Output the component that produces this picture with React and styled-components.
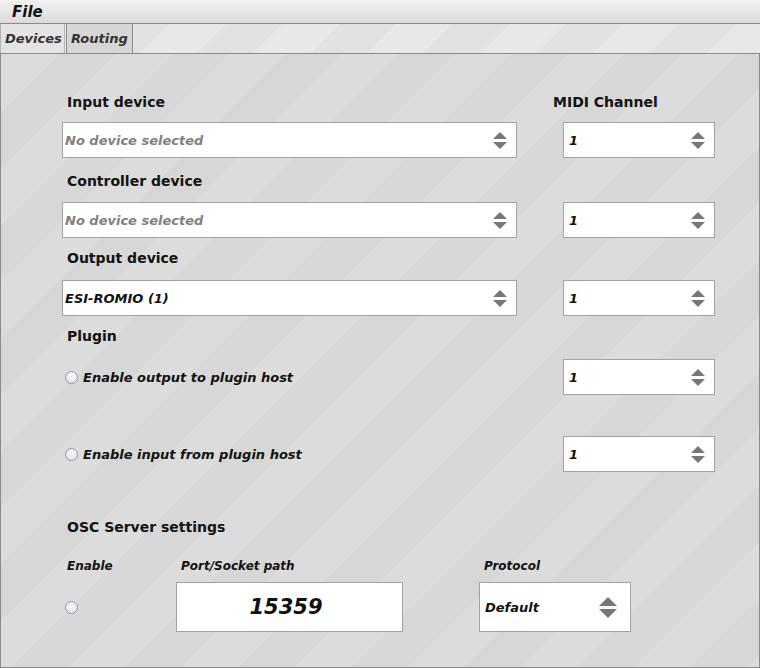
import styled, { createGlobalStyle } from "styled-components";

const GlobalStyle = createGlobalStyle`
  html, body {
    margin: 0;
    padding: 0;
    background: #d9d9d9;
  }
  body {
    font-family: "DejaVu Sans", "Liberation Sans", sans-serif;
    color: #111;
  }
`

const stripes = `repeating-linear-gradient(
  135deg,
  #d7d7d7 0px,
  #d7d7d7 40px,
  #dcdcdc 40px,
  #dcdcdc 80px
)`

const Window = styled.div`
  width: 760px;
  height: 668px;
  display: flex;
  flex-direction: column;
  background: ${stripes};
  overflow: hidden;
`

const MenuBar = styled.div`
  height: 23px;
  display: flex;
  align-items: center;
  padding-left: 12px;
  background: linear-gradient(#f2f2f2, #dadada);
  border-bottom: 1px solid #8a8a8a;

  span {
    font-size: 15px;
    font-weight: bold;
    font-style: italic;
  }
`

const TabBar = styled.div`
  height: 29px;
  display: flex;
  align-items: stretch;
  background: repeating-linear-gradient(135deg, #e2e2e2 0px, #e2e2e2 40px, #e8e8e8 40px, #e8e8e8 80px);
`

const Tab = styled.div`
  display: flex;
  align-items: center;
  padding: 0 4px;
  width: ${p => p.$w}px;
  box-sizing: border-box;
  font-size: 13px;
  font-weight: bold;
  font-style: italic;
  color: #333;
  background: ${p => (p.$active ? "#e4e4e4" : "#d6d6d6")};
  border: 1px solid ${p => (p.$active ? "#b4b4b4" : "#8a8a8a")};
  border-top: none;
  border-bottom: none;
  margin-right: 1px;
`

const Panel = styled.div`
  flex: 1;
  border: 1px solid #8a8a8a;
  padding: 38px 0 0 61px;
  display: flex;
  flex-direction: column;
`

const Row = styled.div`
  display: grid;
  grid-template-columns: 455px 152px;
  column-gap: 46px;
  align-items: center;
  margin-top: ${p => p.$mt || 0}px;
`

const Label = styled.div`
  font-size: 14px;
  font-weight: bold;
  line-height: 20px;
  padding-left: 5px;
  margin-left: ${p => p.$shift || 0}px;
  white-space: nowrap;
`

const SmallLabel = styled.div`
  font-size: 12px;
  font-weight: bold;
  font-style: italic;
  line-height: 20px;
  padding-left: 5px;
`

const Box = styled.div`
  height: ${p => p.$h || 36}px;
  box-sizing: border-box;
  background: #fff;
  border: 1px solid #a2a2a2;
  display: flex;
  align-items: center;
  padding: 0 ${p => p.$pr || 9}px 0 ${p => p.$pl || 2}px;
  font-size: ${p => p.$fs || 13}px;
  font-weight: bold;
  font-style: italic;
  color: ${p => (p.$muted ? "#808080" : "#111")};
  justify-content: ${p => (p.$center ? "center" : "space-between")};
`

const Arrows = ({ size = 14 }) => {
  const h = size / 2;
  return (
    <svg width={size} height={size + 3} viewBox={`0 0 ${size} ${size + 3}`}>
      <polygon points={`0,${h} ${h},0 ${size},${h}`} fill="#777" />
      <polygon points={`0,${h + 3} ${size},${h + 3} ${h},${size + 3}`} fill="#777" />
    </svg>
  );
};

const Combo = ({ children, muted, pl, h, arrow, pr }) => (
  <Box $muted={muted} $pl={pl} $h={h} $pr={pr}>
    <span>{children}</span>
    <Arrows size={arrow} />
  </Box>
);

const RadioRow = styled.label`
  display: flex;
  align-items: center;
  gap: 5px;
  padding-left: 3px;
  font-size: 13px;
  font-weight: bold;
  font-style: italic;
`

const RadioDot = styled.span`
  width: 11px;
  height: 11px;
  border-radius: 50%;
  border: 1px solid #9a9a9a;
  background: radial-gradient(circle at 50% 35%, #fafaff, #dcdce8);
  display: inline-block;
  flex-shrink: 0;
`

const OscGrid = styled.div`
  display: grid;
  grid-template-columns: 114px 227px 76px 152px;
  align-items: center;
  margin-top: ${p => p.$mt || 0}px;
`

const Cell = styled.div`
  grid-column: ${p => p.$col};
`

export default function App() {
  return (
    <Window>
      <GlobalStyle />
      <MenuBar>
        <span>File</span>
      </MenuBar>
      <TabBar>
        <Tab $active $w={65}>Devices</Tab>
        <Tab $w={67}>Routing</Tab>
      </TabBar>
      <Panel>
        <Row>
          <Label>Input device</Label>
          <Label $shift={-15}>MIDI Channel</Label>
        </Row>
        <Row $mt={10}>
          <Combo muted>No device selected</Combo>
          <Combo pl={5}>1</Combo>
        </Row>
        <Row $mt={13}>
          <Label>Controller device</Label>
        </Row>
        <Row $mt={11}>
          <Combo muted>No device selected</Combo>
          <Combo pl={5}>1</Combo>
        </Row>
        <Row $mt={10}>
          <Label>Output device</Label>
        </Row>
        <Row $mt={12}>
          <Combo>ESI-ROMIO (1)</Combo>
          <Combo pl={5}>1</Combo>
        </Row>
        <Row $mt={10}>
          <Label>Plugin</Label>
        </Row>
        <Row $mt={13}>
          <RadioRow>
            <RadioDot />
            Enable output to plugin host
          </RadioRow>
          <Combo pl={5}>1</Combo>
        </Row>
        <Row $mt={41}>
          <RadioRow>
            <RadioDot />
            Enable input from plugin host
          </RadioRow>
          <Combo pl={5}>1</Combo>
        </Row>
        <Row $mt={45}>
          <Label>OSC Server settings</Label>
        </Row>
        <OscGrid $mt={19}>
          <Cell $col={1}><SmallLabel>Enable</SmallLabel></Cell>
          <Cell $col={2}><SmallLabel>Port/Socket path</SmallLabel></Cell>
          <Cell $col={4}><SmallLabel>Protocol</SmallLabel></Cell>
        </OscGrid>
        <OscGrid $mt={6}>
          <Cell $col={1}>
            <RadioRow><RadioDot /></RadioRow>
          </Cell>
          <Cell $col={2}>
            <Box $h={50} $fs={21} $center>15359</Box>
          </Cell>
          <Cell $col={4}>
            <Combo h={50} pl={5} pr={13} arrow={18}>Default</Combo>
          </Cell>
        </OscGrid>
      </Panel>
    </Window>
  );
}
